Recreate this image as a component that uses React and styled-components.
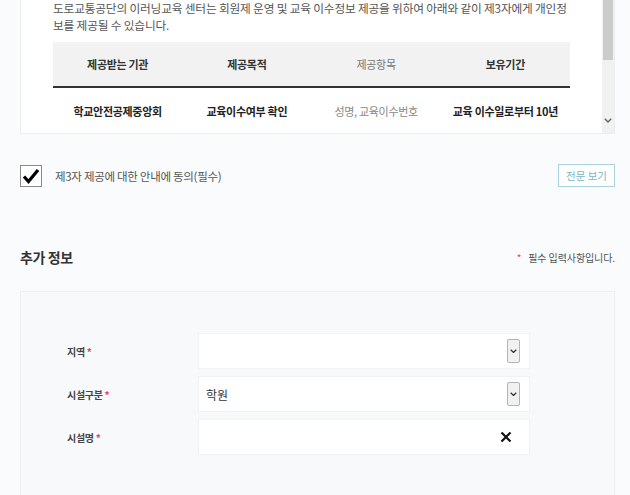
import React from "react";
import styled, { createGlobalStyle } from "styled-components";

const GlobalStyle = createGlobalStyle`
  html, body {
    margin: 0;
    padding: 0;
    background: #fafbfc;
    font-family: "Noto Sans CJK KR", "Noto Sans", sans-serif;
    color: #333;
  }
`;

const Page = styled.div`
  width: 595px;
  margin-left: 20px;
  display: flex;
  flex-direction: column;
`;

const TermsBox = styled.div`
  display: flex;
  height: 134px;
  background: #fff;
  border: 1px solid #eceef1;
  border-top: none;
  box-sizing: border-box;
  overflow: hidden;
`;

const TermsContent = styled.div`
  flex: 1;
  padding: 0 31px 0 32px;
  display: flex;
  flex-direction: column;
`;

const Paragraph = styled.p`
  margin: 0 0 9px;
  font-size: 11.7px;
  line-height: 16.5px;
  letter-spacing: -0.18px;
  color: #555;
`;

const Table = styled.table`
  width: 517px;
  border-collapse: collapse;
  table-layout: fixed;
`;

const Th = styled.th`
  height: 44px;
  background: #f2f2f2;
  border-bottom: 2px solid #333;
  font-size: 11px;
  letter-spacing: -0.3px;
  font-weight: ${(p) => (p.$light ? 400 : 700)};
  color: ${(p) => (p.$light ? "#777" : "#333")};
  text-align: center;
  padding: 0;
`;

const Td = styled.td`
  height: 46px;
  font-size: 11px;
  letter-spacing: -0.3px;
  font-weight: ${(p) => (p.$light ? 400 : 700)};
  color: ${(p) => (p.$light ? "#888" : "#222")};
  text-align: center;
  padding: 0;
`;

const ScrollTrack = styled.div`
  width: 12px;
  background: #f1f1f1;
  display: flex;
  flex-direction: column;
  align-items: center;
  padding-bottom: 10px;
`;

const ScrollThumb = styled.div`
  width: 10px;
  height: 60px;
  background: #cbcbcb;
`;

const ScrollArrow = styled.div`
  margin-top: auto;
  display: flex;
  color: #666;
`;

const AgreeRow = styled.div`
  margin-top: 30px;
  display: flex;
  align-items: center;
  height: 23px;
`;

const CheckBox = styled.span`
  width: 20px;
  height: 20px;
  border: 1px solid #8a8a8a;
  background: #fff;
  display: flex;
  align-items: center;
  justify-content: center;
`;

const AgreeLabel = styled.span`
  margin-left: 13px;
  font-size: 11.5px;
  letter-spacing: -0.3px;
  color: #555;
`;

const OutlineButton = styled.button`
  margin-left: auto;
  width: 57px;
  height: 23px;
  border: 1px solid #a9d4db;
  background: #fff;
  color: #79b6c0;
  font-family: inherit;
  font-size: 10.5px;
  letter-spacing: 0;
  padding: 0;
`;

const SectionHead = styled.div`
  margin-top: 60px;
  display: flex;
  align-items: center;
  height: 20px;
`;

const SectionTitle = styled.h2`
  margin: 0;
  font-size: 14px;
  font-weight: 700;
  letter-spacing: -0.4px;
  color: #333;
`;

const Req = styled.span`
  color: #e2456b;
`;

const RequiredNote = styled.span`
  margin-left: auto;
  font-size: 10px;
  letter-spacing: -0.1px;
  color: #555;
  display: flex;
  gap: 7px;
`;

const FormPanel = styled.div`
  margin-top: 24px;
  background: #f8f9fb;
  border: 1px solid #eef0f3;
  border-bottom: none;
  padding: 41px 0 60px 46px;
  display: flex;
  flex-direction: column;
  gap: 7px;
`;

const FormRow = styled.div`
  display: flex;
  align-items: center;
`;

const FieldLabel = styled.label`
  width: 131px;
  font-size: 10px;
  font-weight: 700;
  letter-spacing: -0.3px;
  color: #444;
`;

const Field = styled.div`
  width: 332px;
  height: 36px;
  box-sizing: border-box;
  background: #fff;
  border: 1px solid #f1f2f4;
  display: flex;
  align-items: center;
  padding: 0 ${(p) => p.$pr || 9}px 0 7px;
`;

const FieldValue = styled.span`
  font-size: 12px;
  color: #333;
`;

const SelectButton = styled.span`
  margin-left: auto;
  width: 13px;
  height: 24px;
  box-sizing: border-box;
  border: 1px solid #b4b4b4;
  border-radius: 2px;
  background: #f1f1f1;
  display: flex;
  align-items: center;
  justify-content: center;
  color: #333;
`;

const ClearIcon = styled.span`
  margin-left: auto;
  display: flex;
`;

const Chevron = ({ size = 8 }) => (
  <svg width={size} height={size * 0.6} viewBox="0 0 10 6" fill="none">
    <path d="M1 1l4 4 4-4" stroke="currentColor" strokeWidth="1.8" />
  </svg>
);

const Select = ({ value }) => (
  <Field>
    {value && <FieldValue>{value}</FieldValue>}
    <SelectButton>
      <Chevron size={7} />
    </SelectButton>
  </Field>
);

export default function App() {
  return (
    <>
      <GlobalStyle />
      <Page>
        <TermsBox>
          <TermsContent>
            <Paragraph>
              도로교통공단의 이러닝교육 센터는 회원제 운영 및 교육 이수정보 제공을 위하여 아래와 같이 제3자에게 개인정보를 제공될 수 있습니다.
            </Paragraph>
            <Table>
              <thead>
                <tr>
                  <Th>제공받는 기관</Th>
                  <Th>제공목적</Th>
                  <Th $light>제공항목</Th>
                  <Th>보유기간</Th>
                </tr>
              </thead>
              <tbody>
                <tr>
                  <Td>학교안전공제중앙회</Td>
                  <Td>교육이수여부 확인</Td>
                  <Td $light>성명, 교육이수번호</Td>
                  <Td>교육 이수일로부터 10년</Td>
                </tr>
              </tbody>
            </Table>
          </TermsContent>
          <ScrollTrack>
            <ScrollThumb />
            <ScrollArrow>
              <Chevron size={8} />
            </ScrollArrow>
          </ScrollTrack>
        </TermsBox>

        <AgreeRow>
          <CheckBox>
            <svg width="18" height="16" viewBox="0 0 18 16">
              <path d="M2 8.5l4.5 5L16 2" fill="none" stroke="#000" strokeWidth="3.2" strokeLinejoin="miter" />
            </svg>
          </CheckBox>
          <AgreeLabel>제3자 제공에 대한 안내에 동의(필수)</AgreeLabel>
          <OutlineButton>전문 보기</OutlineButton>
        </AgreeRow>

        <SectionHead>
          <SectionTitle>추가 정보</SectionTitle>
          <RequiredNote>
            <Req>*</Req>필수 입력사항입니다.
          </RequiredNote>
        </SectionHead>

        <FormPanel>
          <FormRow>
            <FieldLabel>
              지역 <Req>*</Req>
            </FieldLabel>
            <Select />
          </FormRow>
          <FormRow>
            <FieldLabel>
              시설구분 <Req>*</Req>
            </FieldLabel>
            <Select value="학원" />
          </FormRow>
          <FormRow>
            <FieldLabel>
              시설명 <Req>*</Req>
            </FieldLabel>
            <Field $pr={17}>
              <ClearIcon>
                <svg width="12" height="12" viewBox="0 0 12 12">
                  <path d="M1.5 1.5l9 9M10.5 1.5l-9 9" stroke="#111" strokeWidth="2.2" />
                </svg>
              </ClearIcon>
            </Field>
          </FormRow>
        </FormPanel>
      </Page>
    </>
  );
}
